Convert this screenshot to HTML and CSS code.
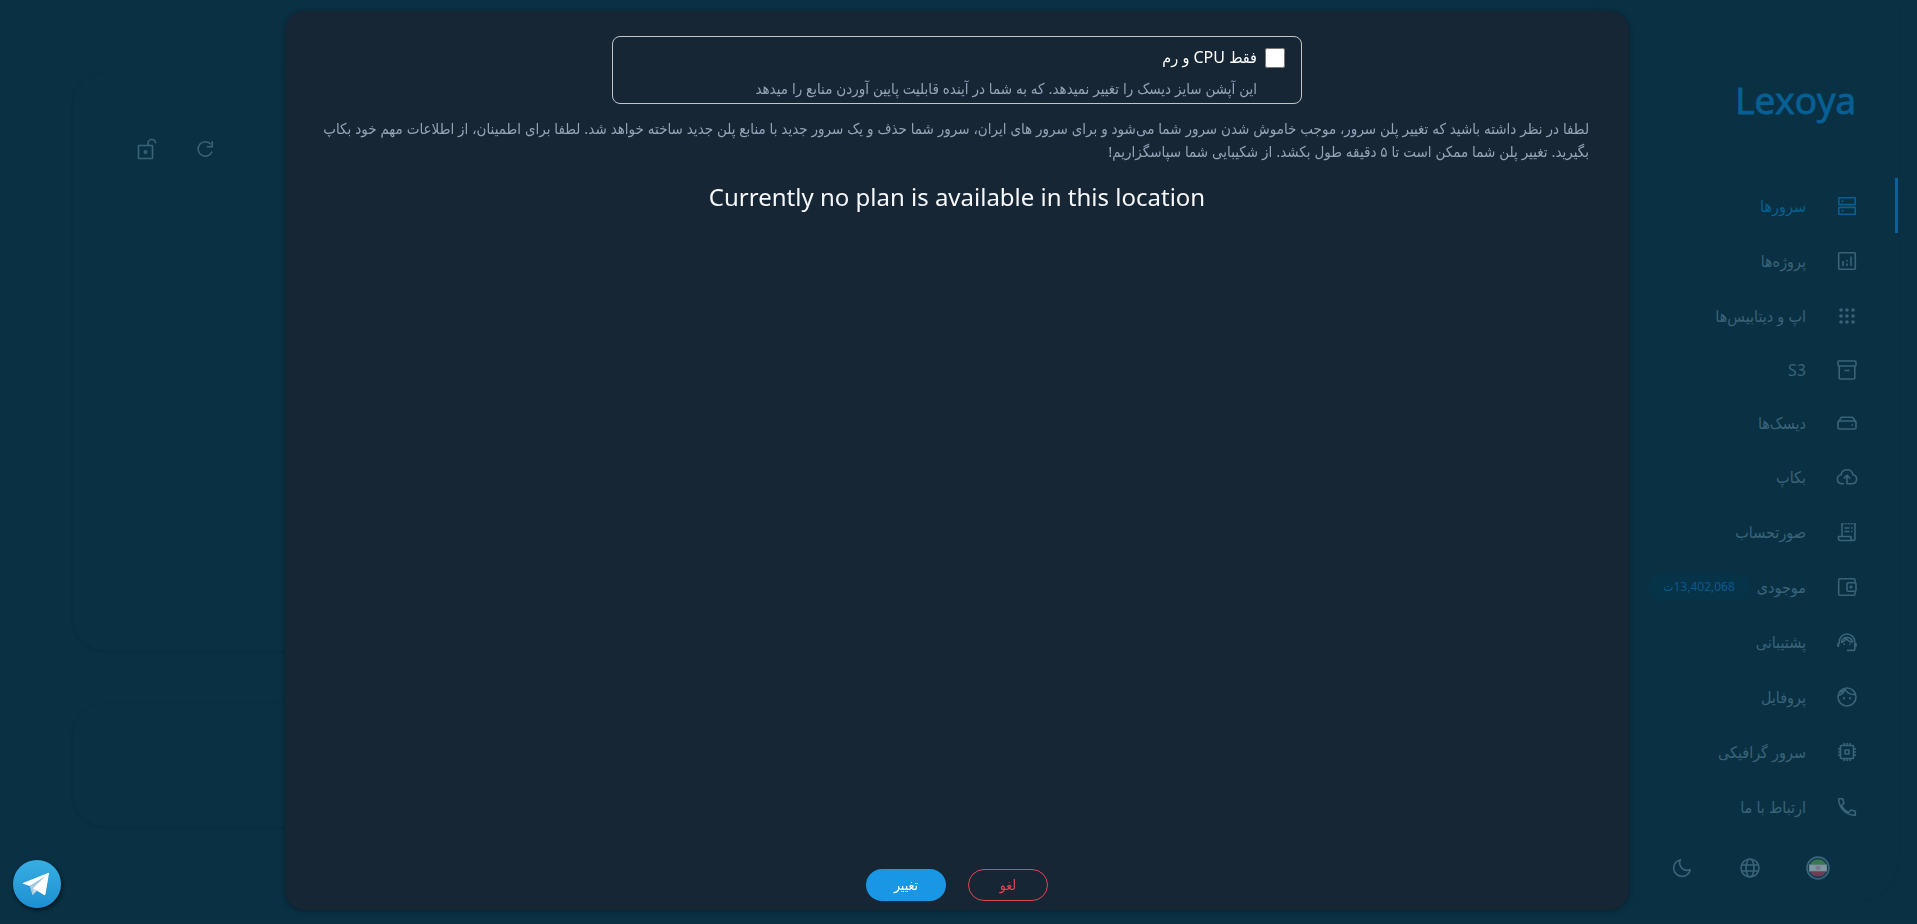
FILE: index.html
```html
<!DOCTYPE html>
<html lang="fa" dir="rtl">
<head>
<meta charset="utf-8">
<meta name="viewport" content="width=device-width, initial-scale=1">
<title>Lexoya</title>
<link rel="stylesheet" href="styles.css">
</head>
<body>
<div class="app">
  <aside class="sidebar">
    <a class="logo" href="#">Lexoya</a>
    <nav class="nav">
      <a class="nav-item active" href="#"><svg class="icon" viewBox="0 0 24 24"><path d="M3.800 3.700h16.400v6.900H3.800zM3.800 13.400h16.400v6.900H3.800z"/><path d="M6.500 7.200h2M6.500 16.800h2"/></svg><span>سرورها</span></a>
      <a class="nav-item" href="#"><svg class="icon" viewBox="0 0 24 24"><rect x="3.700" y="3.700" width="16.600" height="16.600" rx="1"/><path d="M8 12v5M12 14.500V17M12 11v1.500M16 7.500V17"/></svg><span>پروژه‌ها</span></a>
      <a class="nav-item" href="#"><svg class="icon solid" viewBox="0 0 24 24"><circle cx="6" cy="6" r="1.800"/><circle cx="12" cy="6" r="1.800"/><circle cx="18" cy="6" r="1.800"/><circle cx="6" cy="12" r="1.800"/><circle cx="12" cy="12" r="1.800"/><circle cx="18" cy="12" r="1.800"/><circle cx="6" cy="18" r="1.800"/><circle cx="12" cy="18" r="1.800"/><circle cx="18" cy="18" r="1.800"/></svg><span>اپ و دیتابیس‌ها</span></a>
      <a class="nav-item compact" href="#"><svg class="icon" viewBox="0 0 24 24"><rect x="3" y="3" width="18" height="5" rx="1"/><path d="M4.200 8v12a1 1 0 0 0 1 1h13.600a1 1 0 0 0 1-1V8M9.500 12.500h5"/></svg><span>S3</span></a>
      <a class="nav-item compact" href="#"><svg class="icon" viewBox="0 0 24 24"><path d="M3 11.500 6 6.800a1 1 0 0 1 .9-.5h10.200a1 1 0 0 1 .9.500l3 4.700"/><rect x="3" y="10" width="18" height="8" rx="1.500"/><path d="M16.500 14h1.500"/></svg><span>دیسک‌ها</span></a>
      <a class="nav-item" href="#"><svg class="icon" viewBox="0 0 24 24"><path d="M9 18.700H6.800A4.500 4.500 0 0 1 6 9.800a6.100 6.100 0 0 1 12 0 4.500 4.500 0 0 1-.8 8.900H12V10.500M8.800 13.500 12 10.300l3.200 3.200"/></svg><span>بکاپ</span></a>
      <a class="nav-item" href="#"><svg class="icon" viewBox="0 0 24 24"><path d="M7 16.500V3.500M20 3.500v15a2 2 0 0 1-2 2H5.500a2 2 0 0 1-2-2v-2H16v2a2 2 0 0 0 2 2"/><path d="M6.500 3.800h14" stroke-dasharray="2 1"/><path d="M9.500 8h5M9.500 11.500h5M16 8h1.500M16 11.500h1.500"/></svg><span>صورتحساب</span></a>
      <a class="nav-item" href="#"><svg class="icon" viewBox="0 0 24 24"><path d="M20 7.500V5a1.300 1.300 0 0 0-1.300-1.300H5A1.300 1.300 0 0 0 3.700 5v14A1.300 1.300 0 0 0 5 20.300h13.700A1.300 1.300 0 0 0 20 19v-2.500"/><rect x="12" y="7.800" width="9" height="8.400" rx="1.200"/><circle cx="16" cy="12" r=".8"/></svg><span>موجودی</span><span class="badge">13,402,068ت</span></a>
      <a class="nav-item" href="#"><svg class="icon" viewBox="0 0 24 24"><path d="M3.200 17v-4M20.800 13v4" stroke-width="2"/><path d="M4.200 14v-2.200a7.800 7.800 0 0 1 15.600 0v7.600a1 1 0 0 1-1 1H12M6.500 12.200c3-.5 4-2.500 4.300-4.300 1.500 2.800 3.800 4 6.700 4.100A5.600 5.600 0 0 0 6.500 12.200z"/><path d="M8.500 14.200H10M14.300 14.200h1.500"/></svg><span>پشتیبانی</span></a>
      <a class="nav-item" href="#"><svg class="icon" viewBox="0 0 24 24"><circle cx="12" cy="12" r="9"/><path d="M3.500 10.500C7 9.500 9 7.500 10 4c2 4 6 6 10.700 5.400M4.500 7.500 9.500 5"/><path d="M8 13.300h2M14 13.300h2" stroke-width="2"/></svg><span>پروفایل</span></a>
      <a class="nav-item" href="#"><svg class="icon" viewBox="0 0 24 24"><rect x="5.500" y="5.500" width="13" height="13" rx="1"/><rect x="10" y="10" width="4" height="4"/><path d="M9 3v2.500M12 3v2.500M15 3v2.500M9 18.500V21M12 18.500V21M15 18.500V21M3 9h2.500M3 12h2.500M3 15h2.500M18.500 9H21M18.500 12H21M18.500 15H21"/></svg><span>سرور گرافیکی</span></a>
      <a class="nav-item" href="#"><svg class="icon" viewBox="0 0 24 24"><path d="M3.700 3.700h4l1.200 4.500L6.500 10.500a15.500 15.500 0 0 0 7 7l2.300-2.400 4.500 1.200v4C11 20.300 3.700 13 3.700 3.700z"/></svg><span>ارتباط با ما</span></a>
    </nav>
    <div class="tools">
      <button class="tool" type="button" aria-label="ایران"><svg class="flag" viewBox="0 0 24 24"><circle cx="12" cy="12" r="11" fill="#173f52" stroke="#3f667d" stroke-width="1.500"/><path d="M4 8.500a9 9 0 0 1 16 0z" fill="#377a52"/><path d="M3.200 8.500h17.600v7H3.200z" fill="#7d98a3"/><path d="M4 15.500a9 9 0 0 0 16 0z" fill="#6f3d55"/><path d="M3.500 8.800h17M3.500 15.200h17" stroke="#5a8178" stroke-width=".8" stroke-dasharray="1 1"/><path d="M12 10v4M10.200 10.300q-.8 2.200 1 3.200M13.800 10.300q.8 2.200-1 3.200" fill="none" stroke="#7b5b70" stroke-width=".9"/></svg></button>
      <button class="tool" type="button" aria-label="زبان"><svg class="icon" viewBox="0 0 24 24"><circle cx="12" cy="12" r="9"/><ellipse cx="12" cy="12" rx="4" ry="9"/><path d="M3.500 9h17M3.500 15h17"/></svg></button>
      <button class="tool" type="button" aria-label="حالت شب"><svg class="icon" viewBox="0 0 24 24"><path d="M10.500 3.700A7.300 7.300 0 0 0 20.300 13.500 8.400 8.400 0 1 1 10.500 3.700z"/></svg></button>
    </div>
  </aside>
  <main class="content">
    <section class="card card-main">
      <div class="actions">
        <button class="tool" type="button" aria-label="تازه‌سازی"><svg class="icon" viewBox="0 0 24 24"><path d="M17.800 7.300A7.200 7.200 0 1 0 19 14.500M19.200 4.200v5.500h-5.500"/></svg></button>
        <button class="tool" type="button" aria-label="باز کردن قفل"><svg class="icon" viewBox="0 0 24 24"><rect x="3.500" y="8.500" width="14" height="13" rx=".5"/><path d="M13 8.500V6.300a3.800 3.800 0 0 1 7.600 0"/><circle cx="10.500" cy="15" r="1.200"/></svg></button>
      </div>
    </section>
    <section class="card card-secondary"></section>
  </main>
</div>

<div class="overlay">
  <div class="modal" role="dialog" aria-modal="true">
    <div class="option">
      <input type="checkbox" id="cpu-ram" aria-describedby="cpu-ram-help">
      <div class="option-text">
        <label for="cpu-ram">فقط CPU و رم</label>
        <p id="cpu-ram-help">این آپشن سایز دیسک را تغییر نمیدهد. که به شما در آینده قابلیت پایین آوردن منابع را میدهد</p>
      </div>
    </div>
    <p class="notice">لطفا در نظر داشته باشید که تغییر پلن سرور، موجب خاموش شدن سرور شما می‌شود و برای سرور های ایران، سرور شما حذف و یک سرور جدید با منابع پلن جدید ساخته خواهد شد. لطفا برای اطمینان، از اطلاعات مهم خود بکاپ بگیرید. تغییر پلن شما ممکن است تا ۵ دقیقه طول بکشد. از شکیبایی شما سپاسگزاریم!</p>
    <h2 class="empty" dir="ltr">Currently no plan is available in this location</h2>
    <div class="modal-actions">
      <button class="btn btn-cancel" type="button">لغو</button>
      <button class="btn btn-submit" type="button">تغییر</button>
    </div>
  </div>
</div>

<a class="telegram" href="#" aria-label="Telegram"><svg viewBox="0 0 48 48"><defs><linearGradient id="tg" x1="0" y1="0" x2="0" y2="1"><stop offset="0" stop-color="#37aee2"/><stop offset="1" stop-color="#1e90d2"/></linearGradient></defs><circle cx="24" cy="24" r="24" fill="url(#tg)"/><path d="M17 26l2.600 9 5-5z" fill="#c8daea"/><path d="M19.600 35l.8-6.500L31.500 17 17 26z" fill="#a9c9dd"/><path d="M20 28.300 31 35q1.200.5 1.500-1L36 13.500q0-1-1-.6L10 23q-.8.500.2.800l6.600 2.300L32 16.500z" fill="#fff"/></svg></a>
</body>
</html>
```
FILE: styles.css
```css
* {
  box-sizing: border-box;
}

body {
  margin: 0;
  height: 100vh;
  overflow: hidden;
  background: #093143;
  color: #3a637a;
  font-family: "Noto Sans", "DejaVu Sans Condensed", "DejaVu Sans", sans-serif;
  font-size: 16px;
}

p,
h2 {
  margin: 0;
}

button {
  font: inherit;
  color: inherit;
  background: none;
  border: 0;
  padding: 0;
  cursor: pointer;
}

a {
  color: inherit;
  text-decoration: none;
}

.icon {
  display: block;
  flex: none;
  width: 24px;
  height: 24px;
  fill: none;
  stroke: currentColor;
  stroke-width: 1.6;
  stroke-linejoin: round;
}

.icon.solid {
  fill: currentColor;
  stroke: none;
}

.app {
  display: flex;
  height: 100vh;
  padding: 0 19px 0 73px;
}

.sidebar {
  display: flex;
  flex-direction: column;
  flex: none;
  width: 300px;
  margin-bottom: 23px;
  border-radius: 0 0 40px 0;
  box-shadow: 0 0 2px rgba(8, 40, 58, 0.4);
}

.logo {
  padding: 74px 42px 0 0;
  height: 178px;
  color: #075f94;
  font-family: "Open Sans", "Noto Sans", sans-serif;
  font-size: 37px;
  font-weight: 400;
  line-height: 52px;
  -webkit-text-stroke: 1px #075f94;
}

.nav {
  display: flex;
  flex-direction: column;
}

.nav-item {
  display: flex;
  align-items: center;
  height: 55px;
  padding-right: 39px;
}

.nav-item.compact {
  height: 53px;
}

.nav-item .icon {
  margin-left: 29px;
}

.nav-item.active {
  color: #075f94;
  border-right: 3px solid #07639a;
  padding-right: 36px;
}

.badge {
  margin-right: 8px;
  padding: 0 14px;
  border-radius: 13px;
  background: #073349;
  color: #075a8e;
  font-size: 12px;
  line-height: 26px;
}

.tools {
  display: flex;
  align-items: center;
  gap: 44px;
  flex: 1;
  padding-right: 68px;
}

.tool {
  display: block;
}

.flag {
  display: block;
  width: 24px;
  height: 24px;
}

.content {
  display: flex;
  flex-direction: column;
  flex: 1;
  gap: 54px;
  padding: 73px 20px 98px 0;
}

.card {
  border-radius: 32px;
  box-shadow: 0 1px 3px rgba(7, 36, 52, 0.4);
}

.card-main {
  flex: 1;
}

.card-secondary {
  height: 122px;
}

.actions {
  display: flex;
  justify-content: flex-end;
  gap: 34px;
  padding: 64px 0 0 62px;
}

.overlay {
  position: fixed;
  inset: 0;
  display: flex;
  padding: 11px 288px 14px 285px;
}

.modal {
  display: flex;
  flex-direction: column;
  align-items: center;
  flex: 1;
  padding: 25px 32px 9px;
  border-radius: 20px;
  background: #162635;
  box-shadow: 0 1px 5px rgba(8, 24, 42, 0.7);
}

.option {
  display: flex;
  gap: 8px;
  width: 690px;
  max-width: 100%;
  padding: 8px 16px 0;
  border: 1px solid #c4c4c4;
  border-radius: 8px;
}

.option input {
  width: 20px;
  height: 20px;
  margin: 3px 0 0;
}

.option label {
  display: block;
  color: #fff;
  font-size: 16px;
  line-height: 24px;
}

.option p,
.notice {
  color: #94a3b8;
  font-size: 15px;
  line-height: 23px;
}

.option p {
  margin-top: 8px;
  padding-bottom: 3px;
}

.notice {
  align-self: stretch;
  margin-top: 13px;
  padding-right: 8px;
}

.empty {
  flex: 1;
  margin-top: 16px;
  color: #f5f7fa;
  font-size: 24px;
  font-weight: 400;
  line-height: 36px;
}

.modal-actions {
  display: flex;
  gap: 22px;
}

.btn {
  width: 80px;
  height: 32px;
  border-radius: 16px;
  font-size: 14px;
  line-height: 24px;
}

.btn-cancel {
  border: 1px solid #e04654;
  color: #e04654;
}

.btn-submit {
  background: #1997e5;
  color: #fff;
}

.telegram {
  position: fixed;
  left: 13px;
  bottom: 16px;
  width: 48px;
  height: 48px;
  border-radius: 24px;
  box-shadow: 1px 2px 4px rgba(0, 0, 0, 0.6);
}

.telegram svg {
  display: block;
}
```
